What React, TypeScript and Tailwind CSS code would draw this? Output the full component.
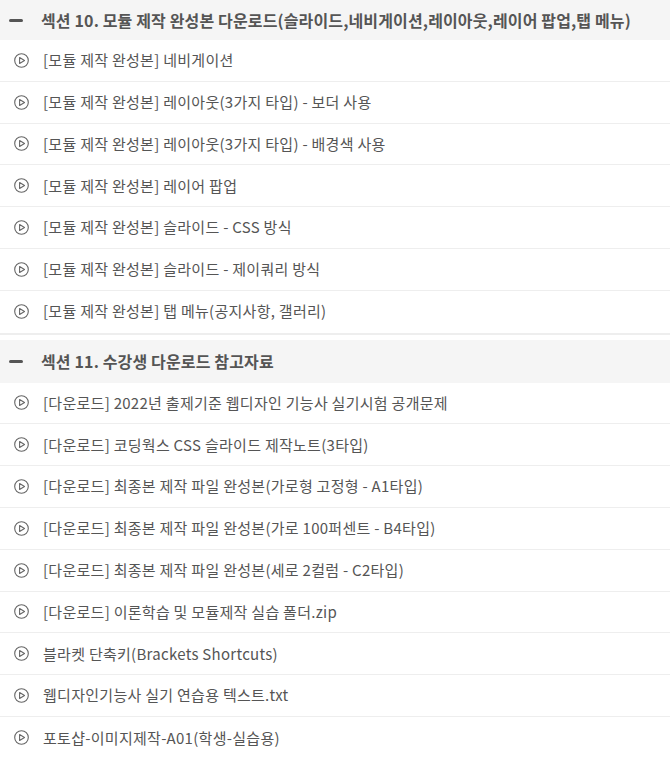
import React from "react";

const sections = [
  {
    title: "섹션 10. 모듈 제작 완성본 다운로드(슬라이드,네비게이션,레이아웃,레이어 팝업,탭 메뉴)",
    items: [
      "[모듈 제작 완성본] 네비게이션",
      "[모듈 제작 완성본] 레이아웃(3가지 타입) - 보더 사용",
      "[모듈 제작 완성본] 레이아웃(3가지 타입) - 배경색 사용",
      "[모듈 제작 완성본] 레이어 팝업",
      "[모듈 제작 완성본] 슬라이드 - CSS 방식",
      "[모듈 제작 완성본] 슬라이드 - 제이쿼리 방식",
      "[모듈 제작 완성본] 탭 메뉴(공지사항, 갤러리)",
    ],
  },
  {
    title: "섹션 11. 수강생 다운로드 참고자료",
    items: [
      "[다운로드] 2022년 출제기준 웹디자인 기능사 실기시험 공개문제",
      "[다운로드] 코딩웍스 CSS 슬라이드 제작노트(3타입)",
      "[다운로드] 최종본 제작 파일 완성본(가로형 고정형 - A1타입)",
      "[다운로드] 최종본 제작 파일 완성본(가로 100퍼센트 - B4타입)",
      "[다운로드] 최종본 제작 파일 완성본(세로 2컬럼 - C2타입)",
      "[다운로드] 이론학습 및 모듈제작 실습 폴더.zip",
      "블라켓 단축키(Brackets Shortcuts)",
      "웹디자인기능사 실기 연습용 텍스트.txt",
      "포토샵-이미지제작-A01(학생-실습용)",
    ],
  },
];

function PlayIcon() {
  return (
    <svg width="15" height="15" viewBox="0 0 15 15" fill="none" stroke="#666" strokeWidth="1.1" className="shrink-0">
      <circle cx="7.5" cy="7.5" r="6.8" />
      <path d="M5.6 4.5 L10.5 7.5 L5.6 10.5 Z" strokeLinejoin="round" />
    </svg>
  );
}

export default function App() {
  return (
    <div className="w-[670px] bg-white font-['Noto_Sans_CJK_KR','Noto_Sans',sans-serif] text-[#555]">
      {sections.map((section, i) => (
        <section key={section.title} className={i === 0 ? "border-b-2 border-[#eee] mb-[5px]" : ""}>
          <div className={`flex items-center bg-[#f5f5f5] pl-[9px] ${i === 0 ? "h-10" : "h-[43px]"}`}>
            <span className="w-[14px] h-[3px] bg-[#555] rounded-sm shrink-0" />
            <h2 className="ml-[18px] text-[16px] tracking-[0.14px] font-bold whitespace-nowrap">{section.title}</h2>
          </div>
          <ul>
            {section.items.map((item, j) => (
              <li
                key={item}
                className={`flex items-center h-[41.8px] pl-[14px] ${j < section.items.length - 1 ? "border-b border-[#eee]" : ""}`}
              >
                <PlayIcon />
                <span className="ml-[14px] text-[15px] tracking-[0.28px] whitespace-nowrap">{item}</span>
              </li>
            ))}
          </ul>
        </section>
      ))}
    </div>
  );
}
